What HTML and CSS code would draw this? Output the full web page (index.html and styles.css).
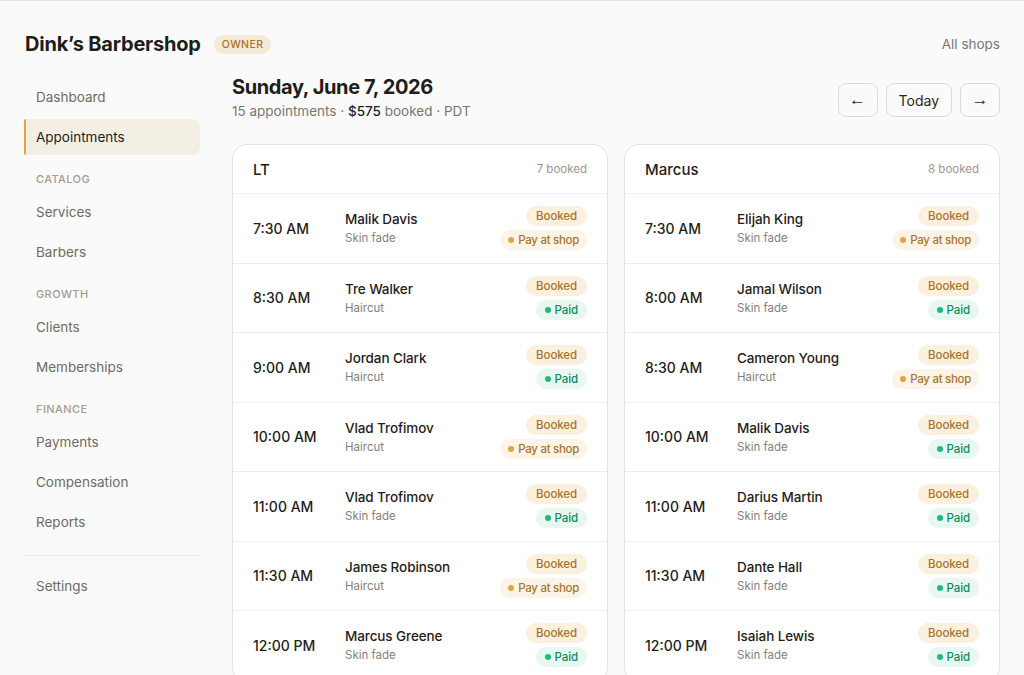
FILE: index.html
```html
<!DOCTYPE html>
<html lang="en">

<head>
    <meta charset="UTF-8">
    <meta name="viewport" content="width=device-width, initial-scale=1.0">
    <title>Dink's Barbershop · Appointments</title>
    <link rel="stylesheet" href="styles.css">
</head>

<body>
    <header class="topbar">
        <div class="marca">
            <span class="nombre">Dink’s Barbershop</span>
            <span class="rol">OWNER</span>
        </div>
        <a class="todas" href="#">All shops</a>
    </header>

    <div class="pagina">
        <nav class="lateral">
            <a class="item" href="#">Dashboard</a>
            <a class="item activo" href="#">Appointments</a>
            <div class="seccion">CATALOG</div>
            <a class="item" href="#">Services</a>
            <a class="item" href="#">Barbers</a>
            <div class="seccion">GROWTH</div>
            <a class="item" href="#">Clients</a>
            <a class="item" href="#">Memberships</a>
            <div class="seccion">FINANCE</div>
            <a class="item" href="#">Payments</a>
            <a class="item" href="#">Compensation</a>
            <a class="item" href="#">Reports</a>
            <hr class="divisor">
            <a class="item" href="#">Settings</a>
        </nav>

        <main class="principal">
            <div class="cabecera">
                <div>
                    <h1>Sunday, June 7, 2026</h1>
                    <p class="resumen">15 appointments · <b>$575</b> booked · PDT</p>
                </div>
                <div class="botones">
                    <button class="btn flecha">←</button>
                    <button class="btn">Today</button>
                    <button class="btn flecha">→</button>
                </div>
            </div>

            <div class="columnas">
                <section class="tarjeta">
                    <div class="tarjeta-titulo">
                        <span class="barbero">LT</span>
                        <span class="total">7 booked</span>
                    </div>
                    <div class="cita">
                        <div class="hora">7:30 AM</div>
                        <div class="cliente"><div class="nombre-c">Malik Davis</div><div class="servicio">Skin fade</div></div>
                        <div class="estados"><span class="pill reservado">Booked</span><span class="pill tienda"><i></i>Pay at shop</span></div>
                    </div>
                    <div class="cita">
                        <div class="hora">8:30 AM</div>
                        <div class="cliente"><div class="nombre-c">Tre Walker</div><div class="servicio">Haircut</div></div>
                        <div class="estados"><span class="pill reservado">Booked</span><span class="pill pagado"><i></i>Paid</span></div>
                    </div>
                    <div class="cita">
                        <div class="hora">9:00 AM</div>
                        <div class="cliente"><div class="nombre-c">Jordan Clark</div><div class="servicio">Haircut</div></div>
                        <div class="estados"><span class="pill reservado">Booked</span><span class="pill pagado"><i></i>Paid</span></div>
                    </div>
                    <div class="cita">
                        <div class="hora">10:00 AM</div>
                        <div class="cliente"><div class="nombre-c">Vlad Trofimov</div><div class="servicio">Haircut</div></div>
                        <div class="estados"><span class="pill reservado">Booked</span><span class="pill tienda"><i></i>Pay at shop</span></div>
                    </div>
                    <div class="cita">
                        <div class="hora">11:00 AM</div>
                        <div class="cliente"><div class="nombre-c">Vlad Trofimov</div><div class="servicio">Skin fade</div></div>
                        <div class="estados"><span class="pill reservado">Booked</span><span class="pill pagado"><i></i>Paid</span></div>
                    </div>
                    <div class="cita">
                        <div class="hora">11:30 AM</div>
                        <div class="cliente"><div class="nombre-c">James Robinson</div><div class="servicio">Haircut</div></div>
                        <div class="estados"><span class="pill reservado">Booked</span><span class="pill tienda"><i></i>Pay at shop</span></div>
                    </div>
                    <div class="cita">
                        <div class="hora">12:00 PM</div>
                        <div class="cliente"><div class="nombre-c">Marcus Greene</div><div class="servicio">Skin fade</div></div>
                        <div class="estados"><span class="pill reservado">Booked</span><span class="pill pagado"><i></i>Paid</span></div>
                    </div>
                </section>

                <section class="tarjeta">
                    <div class="tarjeta-titulo">
                        <span class="barbero">Marcus</span>
                        <span class="total">8 booked</span>
                    </div>
                    <div class="cita">
                        <div class="hora">7:30 AM</div>
                        <div class="cliente"><div class="nombre-c">Elijah King</div><div class="servicio">Skin fade</div></div>
                        <div class="estados"><span class="pill reservado">Booked</span><span class="pill tienda"><i></i>Pay at shop</span></div>
                    </div>
                    <div class="cita">
                        <div class="hora">8:00 AM</div>
                        <div class="cliente"><div class="nombre-c">Jamal Wilson</div><div class="servicio">Skin fade</div></div>
                        <div class="estados"><span class="pill reservado">Booked</span><span class="pill pagado"><i></i>Paid</span></div>
                    </div>
                    <div class="cita">
                        <div class="hora">8:30 AM</div>
                        <div class="cliente"><div class="nombre-c">Cameron Young</div><div class="servicio">Haircut</div></div>
                        <div class="estados"><span class="pill reservado">Booked</span><span class="pill tienda"><i></i>Pay at shop</span></div>
                    </div>
                    <div class="cita">
                        <div class="hora">10:00 AM</div>
                        <div class="cliente"><div class="nombre-c">Malik Davis</div><div class="servicio">Skin fade</div></div>
                        <div class="estados"><span class="pill reservado">Booked</span><span class="pill pagado"><i></i>Paid</span></div>
                    </div>
                    <div class="cita">
                        <div class="hora">11:00 AM</div>
                        <div class="cliente"><div class="nombre-c">Darius Martin</div><div class="servicio">Skin fade</div></div>
                        <div class="estados"><span class="pill reservado">Booked</span><span class="pill pagado"><i></i>Paid</span></div>
                    </div>
                    <div class="cita">
                        <div class="hora">11:30 AM</div>
                        <div class="cliente"><div class="nombre-c">Dante Hall</div><div class="servicio">Skin fade</div></div>
                        <div class="estados"><span class="pill reservado">Booked</span><span class="pill pagado"><i></i>Paid</span></div>
                    </div>
                    <div class="cita">
                        <div class="hora">12:00 PM</div>
                        <div class="cliente"><div class="nombre-c">Isaiah Lewis</div><div class="servicio">Skin fade</div></div>
                        <div class="estados"><span class="pill reservado">Booked</span><span class="pill pagado"><i></i>Paid</span></div>
                    </div>
                </section>
            </div>
        </main>
    </div>
</body>

</html>
```

FILE: styles.css
```css
body {
    margin: 0;
    font-family: Inter, "Noto Sans", sans-serif;
    background-color: #fafafa;
    color: #1f1d1a;
    border-top: 1px solid #e2e2e2;
    height: 674px;
    overflow: hidden;
}

a {
    text-decoration: none;
    color: inherit;
}

.topbar {
    display: flex;
    justify-content: space-between;
    align-items: center;
    padding: 31px 24px 0 25px;
    height: 24px;
}

.marca {
    display: flex;
    align-items: center;
    gap: 13px;
}

.nombre {
    font-size: 20px;
    font-weight: 700;
    letter-spacing: -0.2px;
    line-height: 24px;
}

.rol {
    background-color: #f5ead8;
    color: #a8742a;
    font-size: 10.5px;
    letter-spacing: 0.4px;
    line-height: 19px;
    padding: 0 8px;
    border-radius: 10px;
    font-weight: 500;
}

.todas {
    font-size: 13.5px;
    color: #7a7570;
}

.pagina {
    display: grid;
    grid-template-columns: 176px 1fr;
    gap: 32px;
    padding: 23px 24px 0 24px;
}

/* barra lateral */
.lateral {
    display: flex;
    flex-direction: column;
}

.item {
    display: block;
    height: 36px;
    line-height: 36px;
    padding-left: 12px;
    margin-bottom: 4px;
    font-size: 13.5px;
    color: #6f6a64;
    border-radius: 8px;
}

.activo {
    background-color: #f4efe4;
    color: #1f1d1a;
    border-left: 2px solid #e2a347;
    border-radius: 2px 8px 8px 2px;
    padding-left: 10px;
}

.seccion {
    font-size: 11px;
    letter-spacing: 0.4px;
    color: #a29c95;
    font-weight: 500;
    padding: 14px 0 8px 12px;
    line-height: 13px;
}

.divisor {
    border: 0;
    border-top: 1px solid #ebebeb;
    margin: 11px 0 12px 0;
}

/* contenido principal */
.cabecera {
    display: flex;
    justify-content: space-between;
    align-items: flex-start;
}

h1 {
    font-size: 20px;
    font-weight: 700;
    letter-spacing: -0.4px;
    margin: -2px 0 0 0;
    line-height: 20px;
}

.resumen {
    margin: 5px 0 0 0;
    font-size: 13.5px;
    color: #7a7570;
    line-height: 18px;
}

.resumen b {
    font-weight: 500;
    color: #1f1d1a;
}

.botones {
    display: flex;
    gap: 8px;
    margin-top: 4px;
}

.btn {
    height: 34px;
    padding: 0 12px;
    border: 1px solid #dedbd7;
    border-radius: 8px;
    background-color: #fafafa;
    font-family: inherit;
    font-size: 14px;
    color: #2a2724;
}

.flecha {
    width: 40px;
    padding: 0;
    font-family: "Liberation Sans", sans-serif;
    font-size: 17px;
}

.columnas {
    display: grid;
    grid-template-columns: 1fr 1fr;
    gap: 16px;
    margin-top: 24px;
}

.tarjeta {
    background-color: #fff;
    border: 1px solid #e6e4e1;
    border-radius: 14px;
    overflow: hidden;
}

.tarjeta-titulo {
    display: flex;
    justify-content: space-between;
    align-items: center;
    height: 48px;
    padding: 0 20px;
    border-bottom: 1px solid #efedeb;
}

.barbero {
    font-size: 15px;
    font-weight: 500;
}

.total {
    font-size: 11.5px;
    color: #9b958f;
}

.cita {
    display: flex;
    align-items: center;
    height: 68.5px;
    padding: 0 20px;
    border-bottom: 1px solid #efedeb;
}

.hora {
    width: 92px;
    font-size: 14px;
    font-weight: 500;
}

.cliente {
    flex: 1;
}

.nombre-c {
    font-size: 13.5px;
    font-weight: 500;
    letter-spacing: -0.1px;
    line-height: 18px;
}

.servicio {
    font-size: 11.5px;
    color: #85807a;
    line-height: 16px;
    margin-top: 2px;
}

.estados {
    display: flex;
    flex-direction: column;
    align-items: flex-end;
    gap: 4px;
}

.pill {
    display: flex;
    align-items: center;
    gap: 4px;
    height: 20px;
    padding: 0 9px;
    border-radius: 10px;
    font-size: 11.5px;
    letter-spacing: -0.1px;
    font-weight: 500;
}

.pill i {
    width: 6px;
    height: 6px;
    border-radius: 50%;
}

.reservado {
    background-color: #fbefdd;
    color: #a8742a;
    padding: 0 10px;
}

.tienda {
    background-color: #fcf4e7;
    color: #a8742a;
    padding: 0 8px;
    letter-spacing: -0.3px;
}

.tienda i {
    background-color: #e2a347;
}

.pagado {
    background-color: #e8f8f0;
    color: #0d8a5c;
}

.pagado i {
    background-color: #19bd7e;
}
```
